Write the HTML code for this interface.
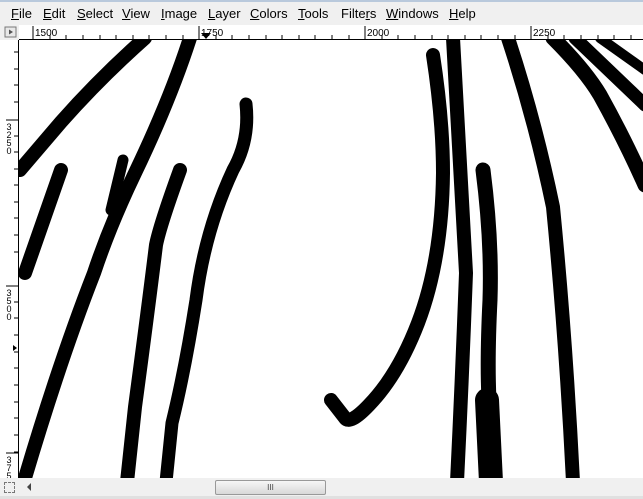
<!DOCTYPE html>
<html><head><style>
body{margin:0;width:643px;height:499px;overflow:hidden;background:#f0f0f0;font-family:"Liberation Sans",sans-serif;position:relative}
.menu{position:absolute;top:0;left:0;width:643px;height:26px;background:#f0f0f0;border-top:2px solid #b9c9dc;box-sizing:border-box;font-size:13px}
.menu span{position:absolute;top:4px}
</style></head><body>
<div class="menu">
<span style="left:11px"><u>F</u>ile</span>
<span style="left:43px"><u>E</u>dit</span>
<span style="left:77px"><u>S</u>elect</span>
<span style="left:122px"><u>V</u>iew</span>
<span style="left:161px"><u>I</u>mage</span>
<span style="left:208px"><u>L</u>ayer</span>
<span style="left:250px"><u>C</u>olors</span>
<span style="left:298px"><u>T</u>ools</span>
<span style="left:341px">Filte<u>r</u>s</span>
<span style="left:386px"><u>W</u>indows</span>
<span style="left:449px"><u>H</u>elp</span>
</div>
<svg style="position:absolute;left:0;top:24px" width="643" height="475">
<rect x="5" y="3" width="11" height="10" fill="#e8e8e8" stroke="#777"/>
<path d="M9 5.5 L13 8 L9 10.5Z" fill="#555"/>
<rect x="19" y="1" width="624" height="15" fill="#fff"/>
<line x1="19" y1="15.5" x2="643" y2="15.5" stroke="#000"/>
<g stroke="#000">
<line x1="33" y1="2" x2="33" y2="15"/><line x1="199" y1="2" x2="199" y2="15"/><line x1="365" y1="2" x2="365" y2="15"/><line x1="531" y1="2" x2="531" y2="15"/>
</g>
<g stroke="#000">
<path d="M50 11v4M66 11v4M83 11v4M100 11v4M116 11v4M133 11v4M149 11v4M166 11v4M183 11v4M216 11v4M232 11v4M249 11v4M266 11v4M282 11v4M299 11v4M315 11v4M332 11v4M349 11v4M382 11v4M398 11v4M415 11v4M432 11v4M448 11v4M465 11v4M481 11v4M498 11v4M515 11v4M548 11v4M564 11v4M581 11v4M598 11v4M614 11v4M631 11v4"/>
</g>
<g font-size="10" font-family="Liberation Sans">
<text x="35" y="12">1500</text><text x="201" y="12">1750</text><text x="367" y="12">2000</text><text x="533" y="12">2250</text>
</g>
<path d="M201 9 L211 9 L206 15Z" fill="#000"/>
<rect x="0" y="16" width="18" height="438" fill="#fff"/>
<line x1="18.5" y1="16" x2="18.5" y2="454" stroke="#000"/>
<g stroke="#000"><path d="M14 28h4M14 45h4M14 61h4M14 78h4M14 112h4M14 128h4M14 145h4M14 161h4M14 178h4M14 194h4M14 211h4M14 228h4M14 278h4M14 294h4M14 311h4M14 328h4M14 344h4M14 361h4M14 378h4M14 394h4M14 411h4M14 428h4"/>
<path d="M6 96h12M6 262h12M6 429h12"/></g>
<g font-size="9" font-family="Liberation Sans" text-anchor="middle">
<text x="9" y="106">3</text><text x="9" y="114">2</text><text x="9" y="122">5</text><text x="9" y="130">0</text>
<text x="9" y="272">3</text><text x="9" y="280">5</text><text x="9" y="288">0</text><text x="9" y="296">0</text>
<text x="9" y="439">3</text><text x="9" y="447">7</text><text x="9" y="455">5</text>
</g>
<path d="M13 321 l4 3 -4 3Z" fill="#000"/>
</svg>
<svg style="position:absolute;left:19px;top:40px" width="624" height="439" viewBox="19 40 624 439">
<rect x="19" y="40" width="624" height="439" fill="#fff"/>
<g fill="none" stroke="#000" stroke-linecap="round" stroke-linejoin="round">
<path stroke-width="14" d="M145 38 Q100 78 61 122 L20 170"/>
<path stroke-width="14" d="M190 38 Q170 100 135 173 Q110 225 94 273 Q60 360 25 478"/>
<path stroke-width="11" d="M123 160 L111 210"/>
<path stroke-width="14" d="M61 170 L25 273"/>
<path stroke-width="14" d="M180 170 Q160 225 156 245 Q148 310 135 407 L127 482"/>
<path stroke-width="13" d="M246 104 Q250 140 233 170 Q205 230 196 300 Q185 370 172 423 L166 482"/>
<path stroke-width="14" d="M433 55 Q443 120 443 173 Q442 260 418 323 Q398 375 369 405 Q350 425 345 418 L331 400"/>
<path stroke-width="14" d="M453 38 Q462 200 466 273 Q462 380 457 482"/>
<path stroke-width="15" d="M483 170 Q492 240 490 300 Q487 360 489 400"/>
<path stroke-width="24" d="M487 400 L491 482"/>
<path stroke-width="14" d="M508 38 Q535 120 553 207 Q566 340 573 482"/>
<path stroke-width="15" d="M553 38 Q585 70 600 95 Q625 140 645 185"/>
<path stroke-width="13" d="M575 38 L645 105"/>
<path stroke-width="10" d="M600 38 L645 70"/>
</g>
</svg>
<div style="position:absolute;left:0;top:478px;width:643px;height:18px;background:#f0f0f0"></div>
<div style="position:absolute;left:4px;top:482px;width:9px;height:9px;border:1px dashed #777"></div>
<div style="position:absolute;left:27px;top:483px;width:0;height:0;border-top:4px solid transparent;border-bottom:4px solid transparent;border-right:4px solid #444"></div>
<div style="position:absolute;left:215px;top:480px;width:109px;height:13px;border:1px solid #999;border-radius:2px;background:linear-gradient(#f6f6f6,#d8d8d8);font-size:8px;text-align:center;line-height:13px;color:#444">III</div>
<div style="position:absolute;left:0;top:496px;width:643px;height:3px;background:#e0e0e0"></div>
</body></html>
